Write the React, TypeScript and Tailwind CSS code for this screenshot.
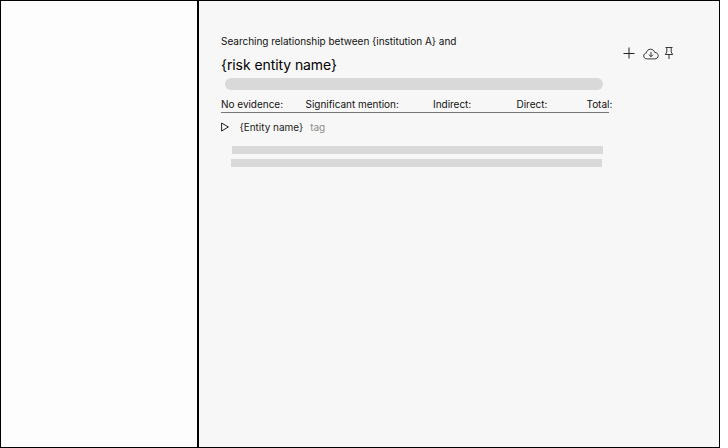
const stats = [
  { label: 'No evidence:', width: 'w-[84.5px]' },
  { label: 'Significant mention:', width: 'w-[127.5px]' },
  { label: 'Indirect:', width: 'w-[83.5px]' },
  { label: 'Direct:', width: 'w-[70px]' },
  { label: 'Total:', width: 'w-[30px]' },
];

function Toolbar() {
  return (
    <div className="ml-auto mr-[45px] mt-[43px] flex h-5 items-start text-[#222222]">
      <svg className="mt-[3px]" width="12" height="12" viewBox="0 0 12 12" fill="none" stroke="currentColor">
        <path d="M6 .5v11M.5 6.5h11" />
      </svg>
      <svg className="ml-2 mt-[4px]" width="16" height="13" viewBox="0 0 16 13" fill="none" stroke="currentColor" strokeWidth=".9" strokeLinecap="round" strokeLinejoin="round">
        <path d="M3.9 10.9C2 10.9.7 9.7.7 8c0-1.500 1-2.700 2.600-3C3.700 2.700 5.400 1.200 7.500 1.200c2 0 3.700 1.300 4.200 3.200C13.800 4.500 15.200 5.900 15.200 7.700c0 1.900-1.400 3.200-3.300 3.200Z" />
        <path d="M8 4.300v4.200M6.200 6.900 8 8.700 9.800 6.900" />
      </svg>
      <svg className="ml-[5px] mt-[2px]" width="10" height="14" viewBox="0 0 10 14" fill="none" stroke="currentColor" strokeWidth=".9">
        <path d="M1.500 1.500h7M2.800 1.500v4.500L1.300 8.500h7.400L7.200 6V1.500M5 8.500V13" />
      </svg>
    </div>
  );
}

export default function App() {
  return (
    <div className="h-[448px] w-[728px] bg-white font-['Inter',sans-serif] text-black">
      <div className="flex h-full w-[720px] border border-black">
        <aside className="w-[196px] shrink-0 bg-[#fdfdfd]" />
        <main className="flex flex-1 items-start self-stretch border-l-2 border-black bg-[#f7f7f7]">
          <section className="ml-[22px] w-[388px] shrink-0 whitespace-nowrap pt-[32px] text-[10px] leading-4 tracking-[-0.025px]">
            <p className="text-[#111111]">Searching relationship between {'{institution A}'} and</p>
            <h1 className="mt-[6px] text-[14px] leading-5 tracking-[-0.08px]">{'{risk entity name}'}</h1>
            <div className="ml-1 mt-[3px] h-3 w-[378px] rounded-full bg-[#d9d9d9]" />
            <div className="mt-[6px] flex h-[17px] border-b border-[#777777] text-[#111111]">
              {stats.map((s) => (
                <span key={s.label} className={`${s.width} shrink-0`}>{s.label}</span>
              ))}
            </div>
            <div className="mt-[6px] flex h-4 items-center">
              <svg width="9" height="10" viewBox="0 0 9 10" fill="none" stroke="#222222">
                <path d="M.6 1v8L7.4 5Z" />
              </svg>
              <span className="ml-[9.5px] text-[#222222]">{'{Entity name}'}</span>
              <span className="ml-[7px] text-[#8c8c8c]">tag</span>
            </div>
            <div className="ml-[11px] mt-[11px] h-2 w-[371px] bg-[#d9d9d9]" />
            <div className="ml-[10px] mt-[5px] h-2 w-[371px] bg-[#d9d9d9]" />
          </section>
          <Toolbar />
        </main>
      </div>
    </div>
  );
}
